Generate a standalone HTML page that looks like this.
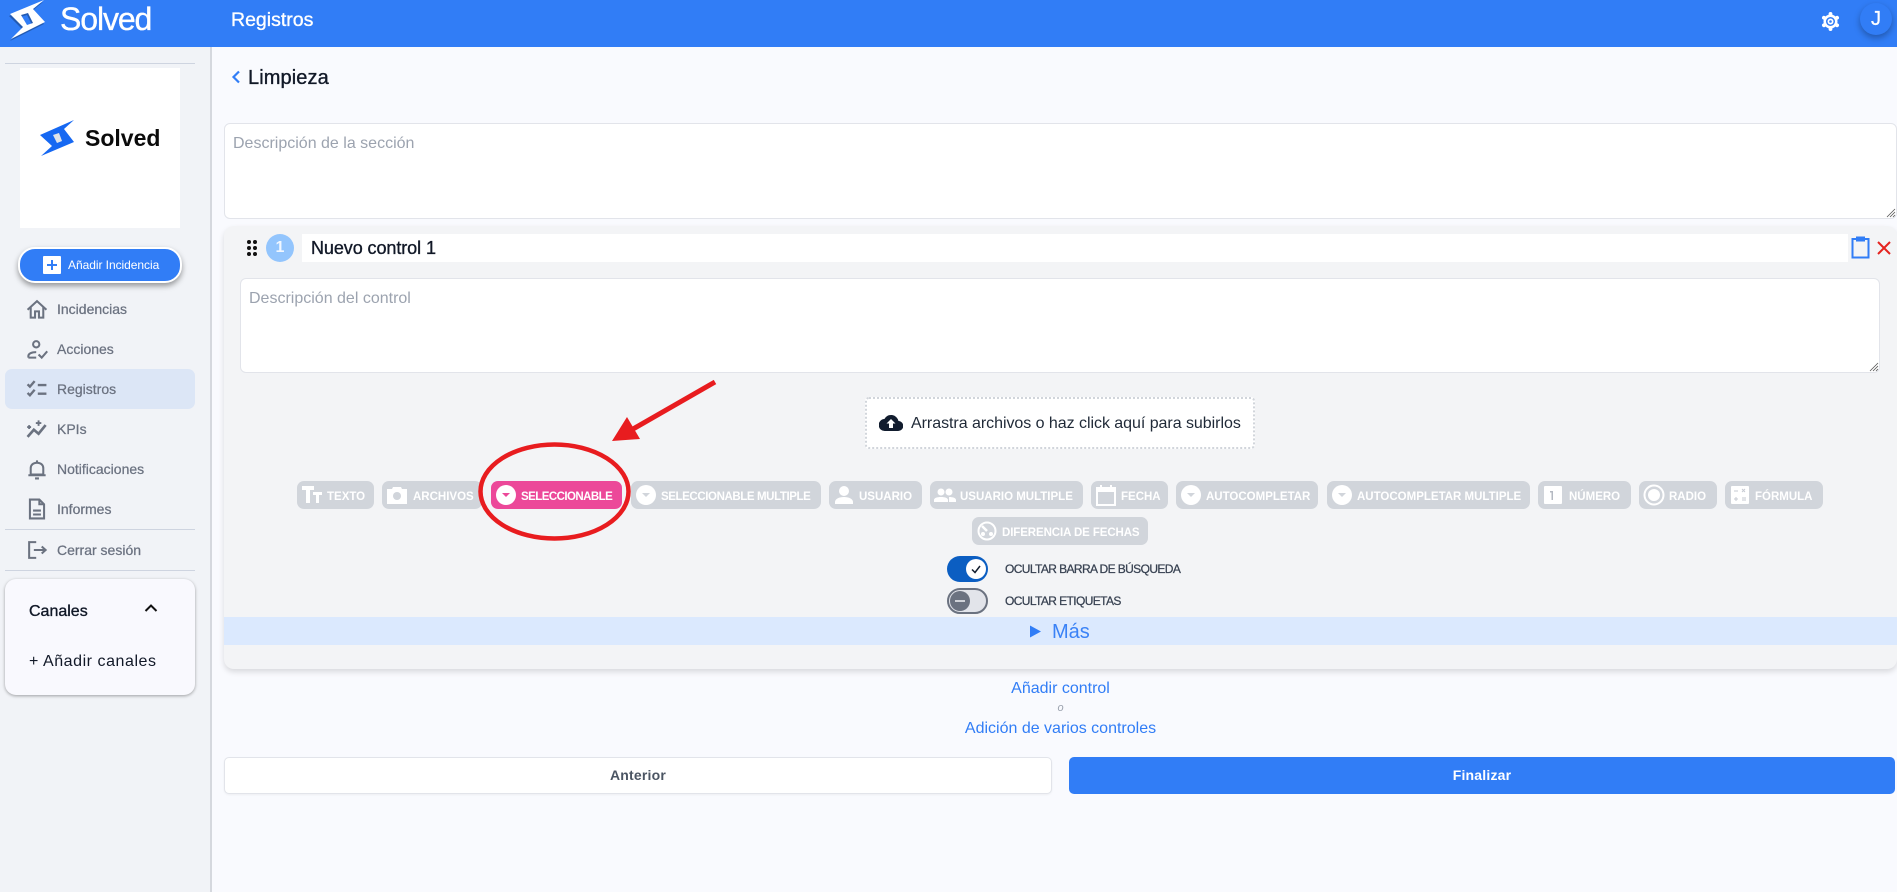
<!DOCTYPE html>
<html lang="es"><head><meta charset="utf-8"><title>Registros</title>
<style>
*{box-sizing:border-box}
html,body{margin:0;padding:0;width:1897px;height:892px;overflow:hidden;background:#f9fafe;font-family:"Liberation Sans",sans-serif}
.a{position:absolute}
.t{position:absolute;white-space:nowrap;line-height:1}
.nav{position:absolute;left:57px;font-size:14px;color:#6b7280;line-height:16px;-webkit-text-stroke:.25px #6b7280;white-space:nowrap}
.nv{position:absolute;left:26px;width:22px;height:22px;fill:none;stroke:#6b7280;stroke-width:2.6}
.ta{position:absolute;background:#fff;border:1px solid #e2e4ea;border-radius:6px}
.ph{position:absolute;font-size:16px;color:#9ca3af;line-height:18px;white-space:nowrap}
.p{position:absolute;top:481px;height:28px;border-radius:7px;background:#d1d5db;color:#fff;font-size:11.5px;font-weight:700;line-height:28px;white-space:nowrap}
.p svg{position:absolute;top:3px;left:4px;width:22px;height:22px}
.p span{position:absolute;top:2px}
.pink{background:#ec4899}
.lbl{position:absolute;left:1005px;font-size:12px;letter-spacing:-.6px;color:#374151;line-height:14px;white-space:nowrap;-webkit-text-stroke:.25px #374151}
</style></head><body>

<!-- header -->
<div class="a" style="left:0;top:0;width:1897px;height:47px;background:#317df6"></div>
<svg class="a" style="left:6px;top:0" width="44" height="42" viewBox="6 0 44 42">
<path fill="#000" opacity=".28" fill-rule="evenodd" transform="translate(-1,2)" d="M44 0 33 9 45 22 11 39 23 27 10 14ZM21 15 28 13 33 23 27 25Z"/>
<path fill="#fff" fill-rule="evenodd" d="M44 0 33 9 45 22 11 39 23 27 10 14ZM21 15 28 13 33 23 27 25Z"/></svg>
<div class="t" style="left:60px;top:1px;font-size:32px;line-height:36px;color:#fff;letter-spacing:-1.1px;-webkit-text-stroke:.35px #fff">Solved</div>
<div class="t" style="left:231px;top:10px;font-size:19.5px;line-height:21px;color:#fff;-webkit-text-stroke:.35px #fff">Registros</div>
<svg class="a" style="left:1820px;top:11px" width="21" height="21" viewBox="-10.500 -10.500 21 21" fill="#fff">
<g stroke="#fff" stroke-width="3.800" stroke-linecap="round"><path d="M0-6.800V-7.600M5.900-3.400 6.600-3.800M5.900 3.400 6.600 3.800M0 6.800V7.600M-5.900 3.400-6.600 3.800M-5.900-3.400-6.600-3.800"/></g>
<circle r="7"/><circle r="4.500" fill="#317df6"/><circle r="3"/><circle r="1.300" fill="#317df6"/></svg>
<div class="a" style="left:1860px;top:3px;width:32px;height:32px;border-radius:50%;background:#317df6;box-shadow:0 3px 7px rgba(0,0,0,.3)"></div>
<div class="t" style="left:1860px;top:9px;width:32px;text-align:center;font-size:20px;line-height:20px;color:#fff;-webkit-text-stroke:.3px #fff">J</div>

<!-- sidebar -->
<div class="a" style="left:0;top:47px;width:212px;height:845px;background:#f1f3f7;border-right:2px solid #d5d8de"></div>
<div class="a" style="left:5px;top:63px;width:190px;height:1px;background:#ced4e0"></div>
<div class="a" style="left:20px;top:68px;width:160px;height:160px;background:#fff"></div>
<svg class="a" style="left:38px;top:118px" width="38" height="40" viewBox="38 118 38 40"><path fill="#dfe3e8" d="M53 135 59 133 62 141 57 143Z"/><path fill="#1668f2" fill-rule="evenodd" d="M74 120 64 129 74 142 41 156 52 146 40 135ZM53 135 59 133 62 141 57 143Z"/></svg>
<div class="t" style="left:85px;top:124px;font-size:23px;line-height:28px;font-weight:700;color:#0b0b0b">Solved</div>

<div class="a" style="left:18px;top:247px;width:164px;height:36px;border-radius:17px;background:#317df6;border:2px solid #fff;box-shadow:0 3px 6px rgba(0,0,0,.38)"></div>
<div class="a" style="left:43px;top:256px;width:18px;height:18px;background:#fff;border-radius:1px"></div>
<svg class="a" style="left:43px;top:256px" width="18" height="18"><path d="M9 4v10M4 9h10" stroke="#317df6" stroke-width="2"/></svg>
<div class="t" style="left:68px;top:258px;font-size:12px;line-height:14px;color:#fff;letter-spacing:-.05px">Añadir Incidencia</div>

<div class="a" style="left:5px;top:369px;width:190px;height:40px;background:#dce6f6;border-radius:7px"></div>

<svg class="nv" style="top:298px" viewBox="0 0 28 28"><path d="M2 15 14 4l12 11M6 12v13h5.500v-8h5v8H22V12"/></svg>
<svg class="nv" style="top:338px" viewBox="0 0 28 28"><circle cx="13" cy="8" r="4"/><path d="M3 25v-2c0-3 4-5 10-5M3 25h10M16 21l4 4 7-8"/></svg>
<svg class="nv" style="top:378px" viewBox="0 0 28 28"><path d="M2 8l3 3L11 4M2 19l3 3 6-7M15 9h11M15 20h11" stroke-width="3"/></svg>
<svg class="nv" style="top:418px" viewBox="0 0 28 28"><path d="M2 24l8-9 6 5 9-11" stroke-width="3.400"/><path d="M4 9v5M1.500 11.500h5M16 3v7M12.500 6.500h7" stroke-width="2.400"/></svg>
<svg class="nv" style="top:458px" viewBox="0 0 28 28"><path d="M6 21v-8c0-4 3-7 8-7s8 3 8 7v8zM3 22h22M14 3v3M11.500 26h5"/></svg>
<svg class="nv" style="top:498px" viewBox="0 0 28 28"><path d="M5 2h12l6 6v18H5zM17 2v6h6M9 16h10M9 21h10"/></svg>
<svg class="nv" style="top:539px" viewBox="0 0 28 28"><path d="M13 4H4v20h9M10 14h15M20 9.500l5 4.500-5 4.500"/></svg>

<div class="nav" style="top:301px">Incidencias</div>
<div class="nav" style="top:341px">Acciones</div>
<div class="nav" style="top:381px">Registros</div>
<div class="nav" style="top:421px">KPIs</div>
<div class="nav" style="top:461px">Notificaciones</div>
<div class="nav" style="top:501px">Informes</div>
<div class="a" style="left:5px;top:529px;width:190px;height:1px;background:#ced4e0"></div>
<div class="nav" style="top:542px">Cerrar sesión</div>
<div class="a" style="left:5px;top:570px;width:190px;height:1px;background:#ced4e0"></div>

<div class="a" style="left:5px;top:579px;width:190px;height:116px;background:#f9f9fe;border-radius:11px;box-shadow:0 1px 3px rgba(0,0,0,.35)"></div>
<div class="t" style="left:29px;top:603px;font-size:16px;line-height:18px;color:#111827;-webkit-text-stroke:.35px #111827">Canales</div>
<svg class="a" style="left:143px;top:602px" width="16" height="12"><path d="M2.500 9 8 3.500 13.500 9" fill="none" stroke="#111" stroke-width="2"/></svg>
<div class="t" style="left:29px;top:653px;font-size:16px;line-height:18px;color:#111827;letter-spacing:.55px">+ Añadir canales</div>

<!-- main -->
<svg class="a" style="left:230px;top:69px" width="12" height="16"><path d="M9 2.500 3.500 8 9 13.500" fill="none" stroke="#317df6" stroke-width="2.200"/></svg>
<div class="t" style="left:248px;top:67px;font-size:20px;line-height:23px;letter-spacing:.1px;color:#111827;-webkit-text-stroke:.35px #111827">Limpieza</div>

<div class="ta" style="left:224px;top:123px;width:1673px;height:96px"></div>
<div class="ph" style="left:233px;top:135px">Descripción de la sección</div>
<svg class="a" style="left:1886px;top:208px" width="10" height="10" stroke="#555" stroke-width=".8"><path d="M9 1 1 9M9 4 4 9M9 7 7 9"/></svg>

<div class="a" style="left:224px;top:226px;width:1673px;height:443px;background:#f3f4f6;border-radius:10px;box-shadow:0 3px 6px rgba(0,0,0,.13)"></div>
<svg class="a" style="left:245px;top:238px" width="14" height="20" fill="#111"><circle cx="4" cy="4" r="2"/><circle cx="10" cy="4" r="2"/><circle cx="4" cy="10" r="2"/><circle cx="10" cy="10" r="2"/><circle cx="4" cy="16" r="2"/><circle cx="10" cy="16" r="2"/></svg>
<div class="a" style="left:266px;top:234px;width:28px;height:28px;border-radius:50%;background:#93c5fd"></div>
<div class="t" style="left:266px;top:240px;width:28px;text-align:center;font-size:16px;line-height:16px;font-weight:700;color:#f1f7ff">1</div>
<div class="a" style="left:302px;top:234px;width:1546px;height:28px;background:#fff"></div>
<div class="t" style="left:311px;top:238px;font-size:18px;line-height:20px;letter-spacing:-.08px;color:#111827;-webkit-text-stroke:.35px #111827">Nuevo control 1</div>
<svg class="a" style="left:1850px;top:235px" width="21" height="24" fill="none" stroke="#317df6" stroke-width="2"><path d="M7 4H2.500v18.500h16V4H14"/><rect x="7" y="2.500" width="7" height="3" fill="#317df6"/></svg>
<svg class="a" style="left:1876px;top:240px" width="16" height="16"><path d="M2 2l12 12M14 2 2 14" stroke="#e5231f" stroke-width="2"/></svg>

<div class="ta" style="left:240px;top:278px;width:1640px;height:95px"></div>
<div class="ph" style="left:249px;top:290px">Descripción del control</div>
<svg class="a" style="left:1869px;top:362px" width="10" height="10" stroke="#555" stroke-width=".8"><path d="M9 1 1 9M9 4 4 9M9 7 7 9"/></svg>

<div class="a" style="left:865px;top:397px;width:390px;height:52px;background:#fff;border:2px dotted #d1d5db;border-radius:4px"></div>
<svg class="a" style="left:879px;top:414px" width="24" height="18" viewBox="0 0 24 18"><path fill="#111c2e" d="M19.400 6.900A7.500 7.500 0 0 0 5.400 5 6 6 0 0 0 6 17h13a5 5 0 0 0 .4-10.100z"/><path fill="#fff" d="M12 5l4.500 4.500H14V14h-4V9.500H7.500z"/></svg>
<div class="t" style="left:911px;top:415px;font-size:16px;line-height:18px;color:#1f2937;letter-spacing:-.04px">Arrastra archivos o haz click aquí para subirlos</div>

<!-- pills -->
<div class="p" style="left:297px;width:77px"><svg viewBox="0 0 22 22" fill="#fff"><path d="M1 2h12v4H9v13H5V6H1zM12 8h9v3h-3v8h-3v-8h-3z"/></svg><span style="left:30px">TEXTO</span></div>
<div class="p" style="left:382px;width:100px"><svg viewBox="0 0 22 22"><path fill="#fff" d="M1 5h5l1-2h8l1 2h5v15H1z"/><circle cx="11" cy="12" r="4" fill="#d1d5db"/></svg><span style="left:31px">ARCHIVOS</span></div>
<div class="p pink" style="left:491px;width:131px"><svg viewBox="0 0 22 22"><circle cx="11" cy="11" r="10" fill="#fff"/><path d="M7 9h8l-4 4z" fill="#ec4899"/></svg><span style="left:30px;letter-spacing:-.55px">SELECCIONABLE</span></div>
<div class="p" style="left:631px;width:190px"><svg viewBox="0 0 22 22"><circle cx="11" cy="11" r="10" fill="#fff"/><path d="M7 9h8l-4 4z" fill="#d1d5db"/></svg><span style="left:30px;letter-spacing:-.4px">SELECCIONABLE MULTIPLE</span></div>
<div class="p" style="left:829px;width:93px"><svg viewBox="0 0 22 22" fill="#fff"><circle cx="11" cy="7" r="5"/><path d="M2 20v-2c0-3 4-5 9-5s9 2 9 5v2z"/></svg><span style="left:30px">USUARIO</span></div>
<div class="p" style="left:930px;width:153px"><svg viewBox="0 0 22 22" fill="#fff"><circle cx="7" cy="8" r="3.500"/><circle cx="15" cy="8" r="3.500"/><path d="M0 18v-2c0-2 3-3 7-3s7 1 7 3v2zM15 18v-5c4 0 7 1 7 3v2z"/></svg><span style="left:30px">USUARIO MULTIPLE</span></div>
<div class="p" style="left:1091px;width:77px"><svg viewBox="0 0 22 22" fill="none" stroke="#fff" stroke-width="2"><rect x="2" y="4" width="18" height="17"/><path d="M2 4h18v3H2z" fill="#fff"/><path d="M6 1v4M16 1v4"/></svg><span style="left:30px">FECHA</span></div>
<div class="p" style="left:1176px;width:142px"><svg viewBox="0 0 22 22"><circle cx="11" cy="11" r="10" fill="#fff"/><path d="M7 9h8l-4 4z" fill="#d1d5db"/></svg><span style="left:30px">AUTOCOMPLETAR</span></div>
<div class="p" style="left:1327px;width:203px"><svg viewBox="0 0 22 22"><circle cx="11" cy="11" r="10" fill="#fff"/><path d="M7 9h8l-4 4z" fill="#d1d5db"/></svg><span style="left:30px">AUTOCOMPLETAR MULTIPLE</span></div>
<div class="p" style="left:1538px;width:93px"><svg viewBox="0 0 22 22"><rect x="2" y="2" width="18" height="18" rx="1" fill="#fff"/><path d="M8 7h3v9H9.500V8.500H8z" fill="#b4b9c2"/></svg><span style="left:31px">NÚMERO</span></div>
<div class="p" style="left:1639px;width:78px"><svg viewBox="0 0 22 22" fill="none"><circle cx="11" cy="11" r="9.500" stroke="#fff" stroke-width="2"/><circle cx="11" cy="11" r="6" fill="#fff"/></svg><span style="left:30px">RADIO</span></div>
<div class="p" style="left:1725px;width:98px"><svg viewBox="0 0 22 22"><rect x="2" y="2" width="18" height="18" rx="1" fill="#fff"/><path d="M5 7h4M13 5l3 3M16 5l-3 3M5 15h4M7 13v4M13 14h4M13 16h4" stroke="#c6cad2" stroke-width="1"/></svg><span style="left:30px">FÓRMULA</span></div>
<div class="p" style="left:972px;top:517px;width:176px"><svg viewBox="0 0 22 22" fill="none" stroke="#fff" stroke-width="2"><circle cx="11" cy="11" r="8.500"/><path d="M11 11 6 6" stroke-width="2.500"/><circle cx="7" cy="14" r="1" fill="#fff"/><circle cx="15" cy="14" r="1" fill="#fff"/></svg><span style="left:30px;letter-spacing:-.1px">DIFERENCIA DE FECHAS</span></div>

<!-- toggles -->
<div class="a" style="left:947px;top:556px;width:41px;height:26px;border-radius:13px;background:#0b5ec2"></div>
<div class="a" style="left:966px;top:559px;width:20px;height:20px;border-radius:50%;background:#fff"></div>
<svg class="a" style="left:970px;top:563px" width="12" height="12"><path d="M2 6.500 5 9.500 10 3" fill="none" stroke="#111c2e" stroke-width="1.500"/></svg>
<div class="lbl" style="top:562px">OCULTAR BARRA DE BÚSQUEDA</div>
<div class="a" style="left:947px;top:588px;width:41px;height:26px;border-radius:13px;background:#e2e4ea;border:2px solid #6b7280"></div>
<div class="a" style="left:950px;top:591px;width:20px;height:20px;border-radius:50%;background:#6b7280"></div>
<div class="a" style="left:955px;top:600px;width:10px;height:2px;background:#cfd2d8"></div>
<div class="lbl" style="top:594px">OCULTAR ETIQUETAS</div>

<!-- mas -->
<div class="a" style="left:224px;top:617px;width:1673px;height:28px;background:#dbe9fe"></div>
<svg class="a" style="left:1029px;top:625px" width="13" height="13"><path d="M1 .5 12 6.500 1 12.500z" fill="#317df6"/></svg>
<div class="t" style="left:1052px;top:621px;font-size:20px;line-height:23px;color:#3a82f6">Más</div>

<div class="t" style="left:0;width:2121px;top:680px;text-align:center;font-size:16px;line-height:18px;color:#317df6">Añadir control</div>
<div class="t" style="left:0;width:2121px;top:702px;text-align:center;font-size:11px;line-height:12px;color:#9ca3af;font-style:italic">o</div>
<div class="t" style="left:0;width:2121px;top:720px;text-align:center;font-size:16px;line-height:18px;color:#317df6">Adición de varios controles</div>

<div class="a" style="left:224px;top:757px;width:828px;height:37px;background:#fff;border:1px solid #e2e4ea;border-radius:5px;box-shadow:0 1px 2px rgba(0,0,0,.05)"></div>
<div class="t" style="left:224px;width:828px;top:767px;text-align:center;font-size:14px;line-height:16px;font-weight:700;color:#4b5563;letter-spacing:.2px">Anterior</div>
<div class="a" style="left:1069px;top:757px;width:826px;height:37px;background:#317df6;border-radius:5px"></div>
<div class="t" style="left:1069px;width:826px;top:767px;text-align:center;font-size:14px;line-height:16px;font-weight:700;color:#fff;letter-spacing:.2px">Finalizar</div>

<!-- annotations -->
<svg class="a" style="left:0;top:0" width="1897" height="892" fill="none">
<ellipse cx="554.500" cy="491.500" rx="74" ry="47" stroke="#e81c1f" stroke-width="4.500"/>
<path d="M715 382 633 429" stroke="#e81c1f" stroke-width="5"/>
<path d="M612 441 627 417 640 439z" fill="#e81c1f"/>
</svg>
</body></html>
